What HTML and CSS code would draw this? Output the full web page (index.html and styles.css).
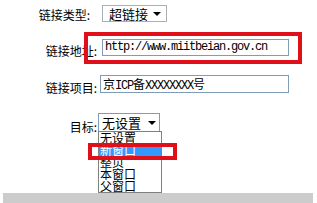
FILE: index.html
```html
<!DOCTYPE html>
<html>
<head>
<meta charset="utf-8">
<link rel="stylesheet" href="styles.css">
</head>
<body>
<div class="page">
  <div class="row row-type">
    <div class="label label-type">链接类型:</div>
    <div class="select select-type"><span class="sel-text">超链接</span><span class="arrow"></span></div>
  </div>
  <div class="row row-url">
    <div class="label">链接地址:</div>
    <div class="input input-url">http://www.miitbeian.gov.cn</div>
  </div>
  <div class="row row-item">
    <div class="label">链接项目:</div>
    <div class="input input-item"><span class="cjk">京</span>ICP<span class="cjk">备</span>XXXXXXXX<span class="cjk">号</span></div>
  </div>
  <div class="row row-target">
    <div class="label">目标:</div>
    <div class="select-wrap">
      <div class="select select-target"><span class="sel-text">无设置</span><span class="arrow"></span></div>
      <ul class="dropdown">
        <li>无设置</li>
        <li class="active">新窗口</li>
        <li>整页</li>
        <li>本窗口</li>
        <li>父窗口</li>
      </ul>
    </div>
  </div>
  <div class="footer-bar"></div>
  <div class="mark mark-url"></div>
  <div class="mark mark-new"></div>
</div>
</body>
</html>
```

FILE: styles.css
```css
html, body {
  margin: 0;
  padding: 0;
  background: #ffffff;
}
.page {
  position: relative;
  width: 317px;
  height: 203px;
  overflow: hidden;
  padding-top: 5px;
  box-sizing: border-box;
  font-family: "Noto Sans CJK SC", "Noto Sans", sans-serif;
  color: #000;
}
.row {
  display: flex;
  align-items: flex-end;
}
.label {
  width: 97px;
  text-align: right;
  font-size: 12px;
  line-height: 12px;
  margin-bottom: -1px;
  flex: none;
}
.label-type {
  width: 90px;
  margin-bottom: 1px;
}
.row-url { margin-top: 17px; }
.row-item { margin-top: 19px; }
.row-target { margin-top: 20px; }

.select {
  box-sizing: border-box;
  border: 1px solid #a9b1b8;
  background: #fff;
  display: flex;
  align-items: center;
  position: relative;
  font-size: 13px;
  line-height: 13px;
}
.select-type {
  margin-left: 12px;
  width: 65px;
  height: 17px;
  padding-left: 6px;
}
.select-target {
  margin-left: 0;
  width: 62px;
  height: 19px;
  padding-left: 3px;
  border-color: #7f9db9;
}
.arrow {
  position: absolute;
  right: 5px;
  top: 50%;
  margin-top: -2px;
  width: 0;
  height: 0;
  border-left: 4px solid transparent;
  border-right: 4px solid transparent;
  border-top: 4px solid #000;
}
.select-target .arrow { right: 3px; }

.input {
  box-sizing: border-box;
  border: 1px solid #7f9db9;
  width: 187px;
  height: 17px;
  padding-left: 2px;
  font-family: "Liberation Mono", monospace;
  font-size: 12px;
  letter-spacing: -1.2px;
  line-height: 15px;
  white-space: nowrap;
}
.input-url { margin-left: 5px; }
.input-item {
  margin-left: 3px;
  width: 189px;
  height: 18px;
  line-height: 16px;
}
.cjk {
  font-family: "Noto Sans CJK SC", sans-serif;
  font-size: 12px;
  letter-spacing: 0;
}

.select-wrap {
  position: relative;
  margin-left: 1px;
}
.dropdown {
  position: absolute;
  left: 0;
  top: 18px;
  width: 64px;
  margin: 0;
  padding: 0;
  list-style: none;
  box-sizing: border-box;
  border: 1px solid #808080;
  background: #fff;
  z-index: 2;
}
.dropdown li {
  height: 12px;
  line-height: 12px;
  font-size: 12px;
  padding-left: 1px;
  white-space: nowrap;
}
.dropdown li.active {
  background: #3399ff;
  color: #fff;
}

.footer-bar {
  margin: 61px 4px 0 3px;
  height: 10px;
  background: #cccccc;
}

.mark {
  position: absolute;
  border: 4px solid #e0101a;
  box-sizing: border-box;
  z-index: 3;
}
.mark-url {
  left: 84px;
  top: 32px;
  width: 218px;
  height: 32px;
}
.mark-new {
  left: 88px;
  top: 143px;
  width: 89px;
  height: 17px;
}
```
